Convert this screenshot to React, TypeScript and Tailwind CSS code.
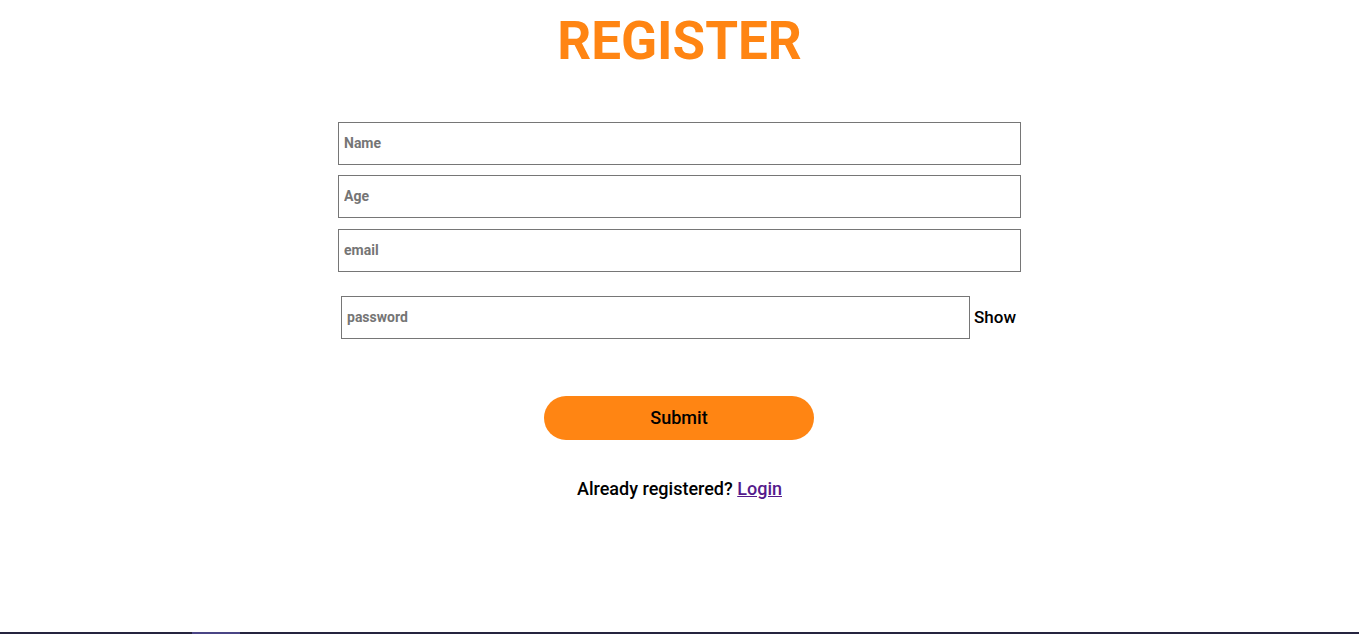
export default function App() {
	return (
		<div className="min-h-screen flex flex-col bg-white font-['Roboto',sans-serif]">
			<main className="flex-1 flex flex-col items-center">
				<h1 className="mt-[8px] text-[53px] leading-[66px] font-bold text-[#ff8513]">
					REGISTER
				</h1>

				<form className="mt-[48px] w-[683px] flex flex-col">
					<input
						type="text"
						placeholder="Name"
						className="h-[43px] w-full border border-[#767676] px-[5px] pb-[2px] text-[14px] font-bold placeholder:text-[#757575] outline-none"
					/>
					<input
						type="text"
						placeholder="Age"
						className="mt-[10px] h-[43px] w-full border border-[#767676] px-[5px] pb-[2px] text-[14px] font-bold placeholder:text-[#757575] outline-none"
					/>
					<input
						type="email"
						placeholder="email"
						className="mt-[11px] h-[43px] w-full border border-[#767676] px-[5px] pb-[2px] text-[14px] font-bold placeholder:text-[#757575] outline-none"
					/>

					<div className="mt-[24px] flex items-center">
						<input
							type="password"
							placeholder="password"
							className="ml-[3px] h-[43px] w-[629px] border border-[#767676] px-[5px] pb-[2px] text-[14px] font-bold placeholder:text-[#757575] outline-none"
						/>
						<span className="ml-[4px] text-[17px] font-medium text-black">Show</span>
					</div>

					<div className="mt-[57px] flex">
						<button
							type="button"
							className="ml-[206px] h-[44px] w-[270px] rounded-full bg-[#ff8513] pb-[1px] text-[18px] font-medium text-black"
						>
							Submit
						</button>
					</div>

					<p className="mt-[35px] text-center text-[18px] font-medium text-black">
						Already registered?{" "}
						<a href="#" className="text-[#551a8b] underline">
							Login
						</a>
					</p>
				</form>
			</main>

			{/* bottom strip */}
			<div className="h-[2px] flex bg-[#25243f]">
				<div className="ml-[192px] w-[48px] bg-[#4a4585]"></div>
			</div>
		</div>
	);
}
